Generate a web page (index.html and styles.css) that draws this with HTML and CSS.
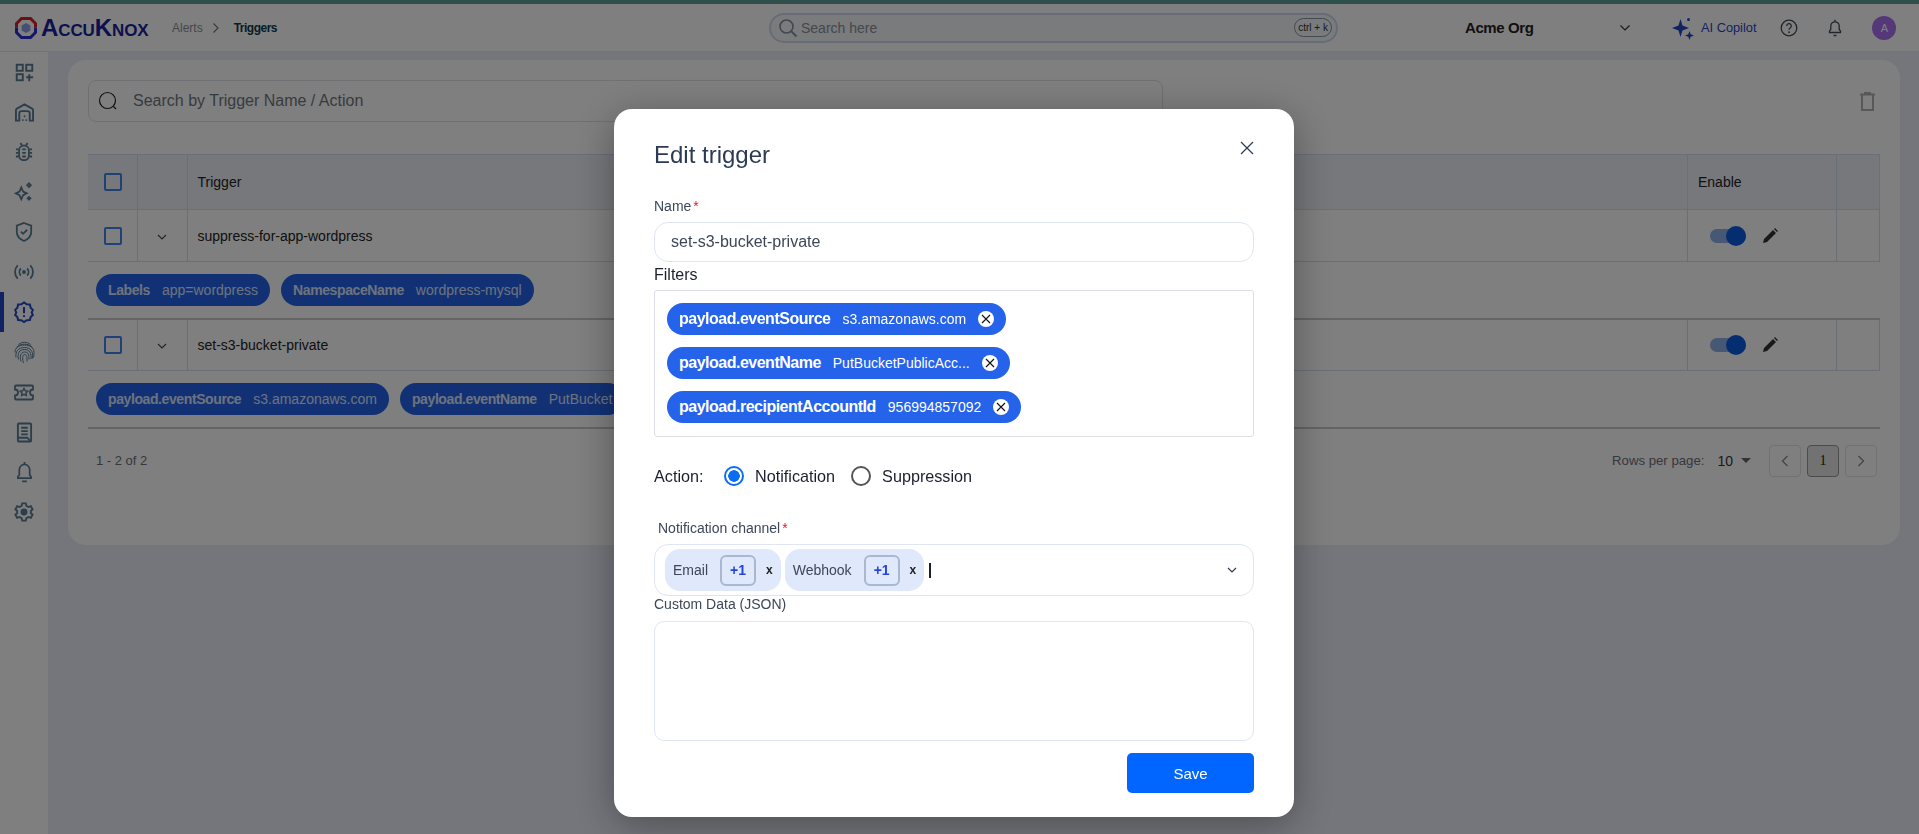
FILE: index.html
```html
<!DOCTYPE html>
<html lang="en">
  <head>
    <meta charset="UTF-8" />
    <title>Triggers</title>
    <link rel="stylesheet" href="styles.css">
  </head>
  <body>
    <div class="top_stripe"></div>
    <header class="top_bar">
      <div class="logo">
        <svg width="24" height="24" viewBox="0 0 24 24" fill="none">
          <path d="M2.500 11.500v-4l5-5h9l5 5v4" stroke="#d3202f" stroke-width="3"/>
          <path d="M2.500 11.500v5l5 5h9l5-5v-5" stroke="#2a2fd0" stroke-width="3"/>
          <path d="M12 7l4.400 2.500v5L12 17l-4.400-2.500v-5z" fill="#8f9ee8"/>
        </svg>
        <span class="logo_text">AccuKnox</span>
      </div>
      <nav class="crumbs">
        <span class="crumb">Alerts</span>
        <svg width="8" height="12" viewBox="0 0 8 12" fill="none"><path d="M1.500 1.500L6 6l-4.500 4.500" stroke="#777" stroke-width="1.200"/></svg>
        <span class="crumb_now">Triggers</span>
      </nav>
      <div class="global_search">
        <svg width="20" height="20" viewBox="0 0 20 20" fill="none"><circle cx="8.500" cy="8.500" r="6.500" stroke="#7f8fa0" stroke-width="1.600"/><path d="M13.500 13.500L18.500 18.500" stroke="#7f8fa0" stroke-width="1.800"/></svg>
        <span class="global_search_text">Search here</span>
        <span class="kbd">ctrl + k</span>
      </div>
      <div class="org">
        <span class="org_name">Acme Org</span>
        <svg class="chev" width="12" height="8" viewBox="0 0 12 8" fill="none"><path d="M1.500 1.500L6 6l4.500-4.500" stroke="#333" stroke-width="1.200"/></svg>
      </div>
      <div class="copilot">
        <svg width="22" height="24" viewBox="0 0 22 24" fill="#2446c8"><path d="M8.500 3l2 6.500 6.500 2.500-6.500 2.500-2 6.500-2-6.500L0 12l6.500-2.500z"/><path d="M17.500 15l1.200 3.300 3.300 1.200-3.300 1.200-1.200 3.300-1.200-3.300-3.300-1.200 3.300-1.200z"/><circle cx="16.500" cy="3.500" r="1.500"/></svg>
        <span>AI Copilot</span>
      </div>
      <svg class="help_icon" width="18" height="18" viewBox="0 0 18 18" fill="none"><circle cx="9" cy="9" r="7.800" stroke="#3f4f5a" stroke-width="1.300"/><path d="M6.700 7a2.300 2.300 0 1 1 3.400 2c-.8.500-1.100.9-1.100 1.800" stroke="#3f4f5a" stroke-width="1.300"/><circle cx="9" cy="13.200" r=".9" fill="#3f4f5a"/></svg>
      <svg class="bell_icon" width="14" height="18" viewBox="0 0 14 18" fill="none"><path d="M1.500 13.500h11V12l-1.300-1.500V7a4.200 4.200 0 0 0-8.400 0v3.500L1.500 12z" stroke="#3f4f5a" stroke-width="1.300"/><path d="M7 .8v2M5.500 16.500h3" stroke="#3f4f5a" stroke-width="1.400"/></svg>
      <span class="avatar">A</span>
    </header>

    <div class="page_body">
      <aside class="side_bar">
        <a class="side_item"><svg width="19" height="19" viewBox="0 0 22 22" fill="none" stroke="#5a7c96" stroke-width="2.200"><rect x="2" y="2" width="7" height="7"/><rect x="13" y="2" width="7" height="7"/><rect x="2" y="13" width="7" height="7"/><path d="M13 16.500h8M16.500 13v8"/></svg></a>
        <a class="side_item"><svg width="21" height="19" viewBox="0 0 22 20" fill="none" stroke="#5a7c96" stroke-width="2"><path d="M2 18.500V7.500q0-1 1-1.500l8-4.500 8 4.500q1 .5 1 1.500v11h-3.500V11a2.500 2.500 0 0 0-2.500-2.500H8A2.500 2.500 0 0 0 5.500 11v7.500z"/><path d="M8.500 18h1.500M12 18h1.500M10.300 14h1.500"/></svg></a>
        <a class="side_item"><svg width="18" height="20" viewBox="0 0 20 22" fill="none" stroke="#5a7c96" stroke-width="2"><rect x="4.500" y="4" width="11" height="16" rx="5"/><path d="M8 8h4M8 12h4M8 16h4M1 8h3M16 8h3M1 12h3M16 12h3M1 16h3M16 16h3M6 1l2 3M14 1l-2 3"/></svg></a>
        <a class="side_item"><svg width="20" height="20" viewBox="0 0 22 22" fill="none" stroke="#5a7c96" stroke-width="2"><path d="M8 6l2 4.500 4 2-4 2L8 19l-2-4.500-4-2 4-2z"/><path d="M16.500 1.500l2 2-2 2-2-2zM16.500 16.500l1.500 1.500-1.500 1.500L15 18z"/></svg></a>
        <a class="side_item"><svg width="18" height="22" viewBox="0 0 20 24" fill="none" stroke="#5a7c96" stroke-width="2"><path d="M10 2l8 3v7c0 5-3.500 8-8 10-4.500-2-8-5-8-10V5z"/><path d="M6.500 11.500l2.500 2.500 4.500-4.500"/></svg></a>
        <a class="side_item"><svg width="22" height="18" viewBox="0 0 24 20" fill="none" stroke="#5a7c96" stroke-width="2"><circle cx="12" cy="10" r="1.200" fill="#5a7c96"/><path d="M8.500 6a6 6 0 0 0 0 8M15.500 6a6 6 0 0 1 0 8M5 2.500a11 11 0 0 0 0 15M19 2.500a11 11 0 0 1 0 15"/></svg></a>
        <a class="side_item side_active"><svg width="20" height="22" viewBox="0 0 22 24" fill="none" stroke="#2446c8" stroke-width="2.200"><path d="M11 1.500l3 2 3.500.300.800 3.400 2.400 2.500-1.200 2.800 1.200 2.800-2.400 2.200-.8 3.300-3.500.300-3 2-3-2-3.500-.300-.8-3.300-2.400-2.200 1.200-2.800-1.200-2.800 2.400-2.500.8-3.400L8 3.500z"/><path d="M11 6.500v7M11 15.500v2"/></svg></a>
        <a class="side_item"><svg width="21" height="23" viewBox="0 0 21 23" fill="none" stroke="#5a7c96" stroke-width="1"><path d="M4.500 3.500c3.500-3 8.500-3 12 0M2.500 6.500c4-4.500 12-4.500 16 0M1 11.500C1 6.500 5 4 10.500 4S20 6.500 20 11.500c0 2 0 3.500-.5 5M2 16.500c-1-6 2.500-10 8.500-10s9 3.500 8 11M4.500 18.500C3 12 5.500 8.500 10.500 8.500s7 3.500 6.500 9.500M7 20.500c-1.500-5-.5-9.500 3.500-9.500s4.500 3 4.500 7.500M9.500 22c-1-3-1.500-8.500 1-8.500s2.500 3 2.500 7"/></svg></a>
        <a class="side_item"><svg width="20" height="17" viewBox="0 0 20 17" fill="none" stroke="#5a7c96" stroke-width="1.800"><path d="M2 1.500h16q1 0 1 1v3a3 3 0 0 0 0 6v3q0 1-1 1H2q-1 0-1-1v-3a3 3 0 0 0 0-6v-3q0-1 1-1z"/><path d="M10 4.500l1.300 2.300 2.500.4-1.800 1.800.4 2.500-2.400-1.200-2.400 1.200.4-2.500-1.800-1.800 2.500-.4z" stroke-width="1.400"/></svg></a>
        <a class="side_item"><svg width="17" height="21" viewBox="0 0 18 22" fill="none" stroke="#5a7c96" stroke-width="2"><rect x="2" y="1.500" width="14" height="19" rx="1"/><path d="M5.500 6h7M5.500 9.500h7M5.500 13h7M2 16.500h10l3 3.500"/></svg></a>
        <a class="side_item"><svg width="17" height="23" viewBox="0 0 18 24" fill="none" stroke="#5a7c96" stroke-width="1.800"><path d="M2 18v-1.500l1.500-2V9a5.500 5.500 0 0 1 11 0v5.500l1.500 2V18z"/><path d="M9 1v2.500M6.500 21.500h5"/></svg></a>
        <a class="side_item side_last"><svg width="20" height="20" viewBox="0 0 22 22" fill="none" stroke="#5a7c96" stroke-width="2"><path d="M9 1.500h4l.6 2.700 2.300 1.300 2.600-.9 2 3.400-2 1.900v2.200l2 1.900-2 3.400-2.600-.9-2.300 1.300-.6 2.700H9l-.6-2.700-2.300-1.300-2.600.9-2-3.400 2-1.900V9.900l-2-1.900 2-3.400 2.600.9 2.300-1.300z"/><circle cx="11" cy="11" r="2.800" fill="#5a7c96"/></svg></a>
      </aside>

      <main class="content">
        <section class="card">
          <div class="tool_row">
            <div class="search_box">
              <svg width="20" height="20" viewBox="0 0 20 20" fill="none"><circle cx="9.500" cy="9.500" r="8" stroke="#222" stroke-width="1.200"/><path d="M15.500 15.500L18 18" stroke="#222" stroke-width="1.200"/></svg>
              <span>Search by Trigger Name / Action</span>
            </div>
            <svg class="trash_icon" width="15" height="19" viewBox="0 0 15 19" fill="none" stroke="#b0b0b0" stroke-width="2"><path d="M0 2.500h15M4 1h7M2 3v15h11V3"/></svg>
          </div>

          <table class="trigger_table">
            <colgroup>
              <col class="col_check" />
              <col class="col_expand" />
              <col />
              <col class="col_enable" />
              <col class="col_last" />
            </colgroup>
            <thead>
              <tr>
                <th><span class="check_box"></span></th>
                <th></th>
                <th>Trigger</th>
                <th>Enable</th>
                <th></th>
              </tr>
            </thead>
            <tbody>
              <tr class="data_row">
                <td class="center"><span class="check_box"></span></td>
                <td class="center"><svg width="10" height="7" viewBox="0 0 10 7" fill="none"><path d="M1 1l4 4 4-4" stroke="#444" stroke-width="1.100"/></svg></td>
                <td>suppress-for-app-wordpress</td>
                <td>
                  <div class="enable_cell">
                    <span class="toggle"><span class="knob"></span></span>
                    <svg width="15" height="15" viewBox="0 0 15 15" fill="#333"><path d="M0 15l1-4L10 2l3 3-9 9zM11 1l1-1 3 3-1 1z"/></svg>
                  </div>
                </td>
                <td></td>
              </tr>
              <tr class="chips_row">
                <td colspan="5">
                  <div class="chips">
                    <span class="tag"><b>Labels</b>app=wordpress</span>
                    <span class="tag"><b>NamespaceName</b>wordpress-mysql</span>
                  </div>
                </td>
              </tr>
              <tr class="data_row">
                <td class="center"><span class="check_box"></span></td>
                <td class="center"><svg width="10" height="7" viewBox="0 0 10 7" fill="none"><path d="M1 1l4 4 4-4" stroke="#444" stroke-width="1.100"/></svg></td>
                <td>set-s3-bucket-private</td>
                <td>
                  <div class="enable_cell">
                    <span class="toggle"><span class="knob"></span></span>
                    <svg width="15" height="15" viewBox="0 0 15 15" fill="#333"><path d="M0 15l1-4L10 2l3 3-9 9zM11 1l1-1 3 3-1 1z"/></svg>
                  </div>
                </td>
                <td></td>
              </tr>
              <tr class="chips_row last_chips">
                <td colspan="5">
                  <div class="chips">
                    <span class="tag"><b>payload.eventSource</b>s3.amazonaws.com</span>
                    <span class="tag"><b>payload.eventName</b>PutBucket</span>
                  </div>
                </td>
              </tr>
            </tbody>
          </table>

          <div class="table_foot">
            <span class="count">1 - 2 of 2</span>
            <span class="rows_label">Rows per page:</span>
            <span class="rows_value">10</span>
            <span class="rows_caret"></span>
            <span class="page_btn"><svg width="8" height="12" viewBox="0 0 8 12" fill="none"><path d="M6.500 1L1.500 6l5 5" stroke="#888" stroke-width="1.300"/></svg></span>
            <span class="page_btn page_now">1</span>
            <span class="page_btn"><svg width="8" height="12" viewBox="0 0 8 12" fill="none"><path d="M1.500 1l5 5-5 5" stroke="#888" stroke-width="1.300"/></svg></span>
          </div>
        </section>
      </main>
    </div>

    <div class="overlay">
      <div class="modal">
        <div class="modal_head">
          <h2>Edit trigger</h2>
          <svg width="14" height="14" viewBox="0 0 14 14" fill="none"><path d="M1 1l12 12M13 1L1 13" stroke="#2d3a55" stroke-width="1.200"/></svg>
        </div>

        <label class="field_label">Name<i>*</i></label>
        <div class="text_field">set-s3-bucket-private</div>

        <label class="filters_label">Filters</label>
        <div class="filters_box">
          <span class="filter_chip"><b>payload.eventSource</b><span>s3.amazonaws.com</span><svg width="16" height="16" viewBox="0 0 16 16"><circle cx="8" cy="8" r="8" fill="#fff"/><path d="M4 4l8 8M12 4l-8 8" stroke="#111" stroke-width="1.100"/></svg></span>
          <span class="filter_chip"><b>payload.eventName</b><span>PutBucketPublicAcc...</span><svg width="16" height="16" viewBox="0 0 16 16"><circle cx="8" cy="8" r="8" fill="#fff"/><path d="M4 4l8 8M12 4l-8 8" stroke="#111" stroke-width="1.100"/></svg></span>
          <span class="filter_chip"><b>payload.recipientAccountId</b><span>956994857092</span><svg width="16" height="16" viewBox="0 0 16 16"><circle cx="8" cy="8" r="8" fill="#fff"/><path d="M4 4l8 8M12 4l-8 8" stroke="#111" stroke-width="1.100"/></svg></span>
        </div>

        <div class="action_row">
          <span class="action_label">Action:</span>
          <span class="radio radio_on"></span>
          <span class="radio_text">Notification</span>
          <span class="radio"></span>
          <span class="radio_text">Suppression</span>
        </div>

        <label class="field_label channel_label">Notification channel<i>*</i></label>
        <div class="channel_select">
          <span class="channel_chip">Email<span class="plus_box">+1</span><span class="chip_x">x</span></span>
          <span class="channel_chip">Webhook<span class="plus_box">+1</span><span class="chip_x">x</span></span>
          <span class="caret"></span>
          <svg class="select_chev" width="10" height="7" viewBox="0 0 10 7" fill="none"><path d="M1 1l4 4 4-4" stroke="#2d3a55" stroke-width="1.200"/></svg>
        </div>

        <label class="field_label json_label">Custom Data (JSON)</label>
        <div class="json_box"></div>

        <div class="modal_foot">
          <button class="save_btn">Save</button>
        </div>
      </div>
    </div>
  </body>
</html>
```

FILE: styles.css
```css
* {
  box-sizing: border-box;
  padding: 0;
  margin: 0;
}
html,
body {
  height: 100%;
  overflow: hidden;
}
body {
  font-family: "Liberation Sans", Arial, sans-serif;
  font-size: 14px;
  color: #1f2530;
  background-color: #e8edf8;
  display: flex;
  flex-direction: column;
}
.top_stripe {
  height: 4px;
  background-color: #5c9e94;
}
.top_bar {
  height: 48px;
  flex-shrink: 0;
  display: flex;
  align-items: center;
  background-color: #fff;
  border-bottom: 1px solid #e4e6ea;
  padding-left: 14px;
}
.logo {
  display: flex;
  align-items: center;
  gap: 3px;
  width: 158px;
}
.logo_text {
  font-size: 24px;
  font-variant: small-caps;
  color: #1c1e9c;
  letter-spacing: -0.1px;
  line-height: 24px;
  font-weight: 700;
}
.crumbs {
  display: flex;
  align-items: center;
  gap: 9px;
  width: 597px;
  font-size: 12px;
}
.crumb {
  color: #8a8f99;
}
.crumb_now {
  color: #12384f;
  font-weight: 700;
  margin-left: 5px;
  letter-spacing: -0.5px;
}
.global_search {
  width: 569px;
  height: 30px;
  display: flex;
  align-items: center;
  gap: 3px;
  padding: 0 4px 0 7px;
  background-color: #f3f6fb;
  border: 2px solid #ccd9ee;
  border-radius: 15px;
}
.global_search_text {
  flex: 1;
  font-size: 14px;
  color: #8a9099;
}
.kbd {
  border: 1px solid #8a94a2;
  border-radius: 11px;
  font-size: 10px;
  padding: 3px 3px;
  color: #333;
}
.org {
  width: 168px;
  margin-left: 127px;
  display: flex;
  align-items: center;
  justify-content: space-between;
  padding-right: 2px;
}
.org_name {
  font-size: 15px;
  font-weight: 700;
  color: #222;
  letter-spacing: -0.4px;
}
.copilot {
  display: flex;
  align-items: center;
  gap: 7px;
  margin-left: 39px;
  font-size: 12.800px;
  color: #2446c8;
}
.help_icon {
  margin-left: 24px;
}
.bell_icon {
  margin-left: 30px;
}
.avatar {
  width: 24px;
  height: 24px;
  margin-left: 30px;
  border-radius: 50%;
  background-color: #a870f0;
  color: #fff;
  font-size: 11px;
  display: flex;
  align-items: center;
  justify-content: center;
}
.page_body {
  flex: 1;
  display: flex;
  min-height: 0;
}
.side_bar {
  width: 48px;
  background-color: #fff;
  flex-shrink: 0;
}
.side_item {
  height: 40px;
  display: flex;
  align-items: center;
  justify-content: center;
  border-left: 4px solid transparent;
  padding-right: 4px;
}
.side_active {
  border-left-color: #2446c8;
}
.content {
  flex: 1;
  padding: 8px 19px 0 20px;
}
.card {
  height: 485px;
  background-color: #fff;
  border-radius: 18px;
  padding: 20px 20px 0;
}
.tool_row {
  display: flex;
  align-items: center;
  justify-content: space-between;
  padding-right: 5px;
}
.search_box {
  width: 1075px;
  height: 42px;
  display: flex;
  align-items: center;
  gap: 15px;
  padding-left: 9px;
  border: 1px solid #dde1e7;
  border-radius: 8px;
  font-size: 16px;
  color: #6f7680;
}
.trigger_table {
  width: 100%;
  margin-top: 32px;
  border-collapse: collapse;
  table-layout: fixed;
}
.col_check {
  width: 49px;
}
.col_expand {
  width: 50px;
}
.col_enable {
  width: 149px;
}
.col_last {
  width: 43px;
}
.trigger_table th {
  height: 55px;
  background-color: #eef1f8;
  border: 1px solid #d3def2;
  font-weight: 400;
  text-align: left;
  padding-left: 10px;
  color: #222;
}
.trigger_table th:first-child {
  padding-left: 16px;
}
.data_row td {
  height: 52px;
  border: 1px solid #d3def2;
  padding-left: 10px;
  color: #222;
}
.data_row td:nth-child(3) {
  border-right: none;
}
.data_row td:nth-child(4) {
  border-left: 1px solid #d3def2;
}
.trigger_table .center {
  padding-left: 0;
  text-align: center;
}
.data_row td.center:first-child {
  padding-left: 16px;
  text-align: left;
}
.data_row td:first-child,
.trigger_table th:first-child,
.chips_row td {
  border-left: none;
}
.check_box {
  display: block;
  width: 18px;
  height: 18px;
  border: 2px solid #3f82f0;
  border-radius: 2px;
}
.enable_cell {
  display: flex;
  align-items: center;
  gap: 17px;
  padding-left: 12px;
}
.toggle {
  width: 36px;
  height: 14px;
  display: block;
  border-radius: 7px;
  background-color: #8fb0e8;
  position: relative;
}
.knob {
  position: absolute;
  top: -3px;
  right: 0;
  width: 20px;
  height: 20px;
  border-radius: 50%;
  background-color: #0a5ce0;
}
.chips_row td {
  height: 57px;
  padding-left: 8px;
  border-bottom: 2px solid #c9c9c9;
}
.chips {
  display: flex;
  gap: 11px;
}
.tag {
  height: 32px;
  display: flex;
  align-items: center;
  gap: 12px;
  padding: 0 12px;
  border-radius: 16px;
  background-color: #2563eb;
  color: #dbe5fb;
  font-size: 14px;
  white-space: nowrap;
}
.tag b {
  letter-spacing: -0.4px;
}
.table_foot {
  display: flex;
  align-items: center;
  margin-top: 16px;
  padding-left: 8px;
  padding-right: 3px;
  height: 32px;
  color: #6b7078;
}
.count {
  flex: 1;
  font-size: 13px;
}
.rows_label {
  font-size: 13.200px;
}
.rows_value {
  margin-left: 13px;
  color: #333;
  font-size: 14px;
}
.rows_caret {
  margin-left: 8px;
  border-left: 5px solid transparent;
  border-right: 5px solid transparent;
  border-top: 5px solid #666;
  margin-right: 18px;
}
.page_btn {
  width: 32px;
  height: 32px;
  margin-left: 6px;
  display: flex;
  align-items: center;
  justify-content: center;
  border: 1px solid #e3e3e3;
  border-radius: 4px;
}
.page_btn:nth-last-child(3) {
  margin-left: 0;
}
.page_now {
  background-color: #e4e4e4;
  border-color: #999;
  color: #222;
  font-family: "Liberation Serif", serif;
  font-size: 14px;
}
.overlay {
  position: fixed;
  top: 0;
  left: 0;
  right: 0;
  bottom: 0;
  background-color: rgba(0, 0, 0, 0.5);
  padding: 109px 0 0 614px;
}
.modal {
  width: 680px;
  height: 708px;
  background-color: #fff;
  border-radius: 18px;
  box-shadow: 0 8px 40px rgba(0, 0, 0, 0.35);
  padding: 28px 40px 0;
  color: #2d3a55;
}
.modal_head {
  display: flex;
  justify-content: space-between;
  align-items: flex-start;
  height: 61px;
}
.modal_head h2 {
  font-size: 24px;
  font-weight: 400;
  line-height: 36px;
}
.modal_head svg {
  margin-top: 4px;
}
.field_label {
  display: block;
  font-size: 14px;
  line-height: 16px;
  color: #3d4759;
}
.field_label i {
  color: #e02020;
  font-style: normal;
  margin-left: 2px;
}
.text_field {
  height: 40px;
  margin-top: 8px;
  padding-left: 16px;
  display: flex;
  align-items: center;
  border: 1px solid #dfe5f3;
  border-radius: 14px;
  font-size: 16px;
  color: #3d4759;
}
.filters_label {
  display: block;
  font-size: 16px;
  line-height: 20px;
  margin-top: 3px;
  color: #1b2030;
}
.filters_box {
  height: 147px;
  margin-top: 5px;
  padding: 12px 12px 0;
  display: flex;
  flex-direction: column;
  align-items: flex-start;
  gap: 12px;
  border: 1px solid #dcdfe6;
  border-radius: 3px;
}
.filter_chip {
  height: 32px;
  display: flex;
  align-items: center;
  padding: 0 12px;
  border-radius: 16px;
  background-color: #2563eb;
  color: #fff;
  font-size: 14px;
  white-space: nowrap;
}
.filter_chip b {
  font-size: 16px;
  letter-spacing: -0.5px;
  margin-right: 12px;
}
.filter_chip svg {
  margin-left: 12px;
}
.action_row {
  display: flex;
  align-items: center;
  height: 24px;
  margin-top: 27px;
  font-size: 16.200px;
  color: #1b2030;
}
.action_label {
  width: 70px;
}
.radio {
  width: 20px;
  height: 20px;
  border-radius: 50%;
  border: 2px solid #555;
  flex-shrink: 0;
}
.radio_on {
  border-color: #0b6ef0;
  background: radial-gradient(circle, #0b6ef0 0 5.500px, #fff 6px);
}
.radio_text {
  margin: 0 16px 0 11px;
}
.channel_label {
  margin-top: 32px;
  margin-left: 4px;
}
.channel_select {
  height: 52px;
  margin-top: 8px;
  padding: 0 10px;
  display: flex;
  align-items: center;
  gap: 4px;
  border: 1px solid #dfe5f3;
  border-radius: 14px;
}
.channel_chip {
  height: 42px;
  display: flex;
  align-items: center;
  padding: 0 8px;
  border-radius: 15px;
  background-color: #e0e8fb;
  font-size: 14px;
  color: #3d4759;
}
.plus_box {
  width: 36px;
  height: 31px;
  margin: 0 10px 0 12px;
  display: flex;
  align-items: center;
  justify-content: center;
  border: 2px solid #a8b8d0;
  border-radius: 6px;
  color: #2446d8;
  font-weight: 700;
  font-size: 14px;
}
.chip_x {
  color: #222;
  font-weight: 700;
  font-size: 12px;
}
.caret {
  width: 1.500px;
  height: 15px;
  background-color: #1b2030;
  margin-left: 1px;
}
.select_chev {
  margin-left: auto;
  margin-right: 6px;
}
.json_label {
  line-height: 17px;
}
.json_box {
  height: 120px;
  margin-top: 8px;
  border: 1px solid #dfe5f3;
  border-radius: 10px;
}
.modal_foot {
  display: flex;
  justify-content: flex-end;
  margin-top: 12px;
}
.save_btn {
  width: 127px;
  height: 40px;
  border: none;
  border-radius: 5px;
  background-color: #0066ff;
  color: #fff;
  font-family: inherit;
  font-size: 15px;
}
```
